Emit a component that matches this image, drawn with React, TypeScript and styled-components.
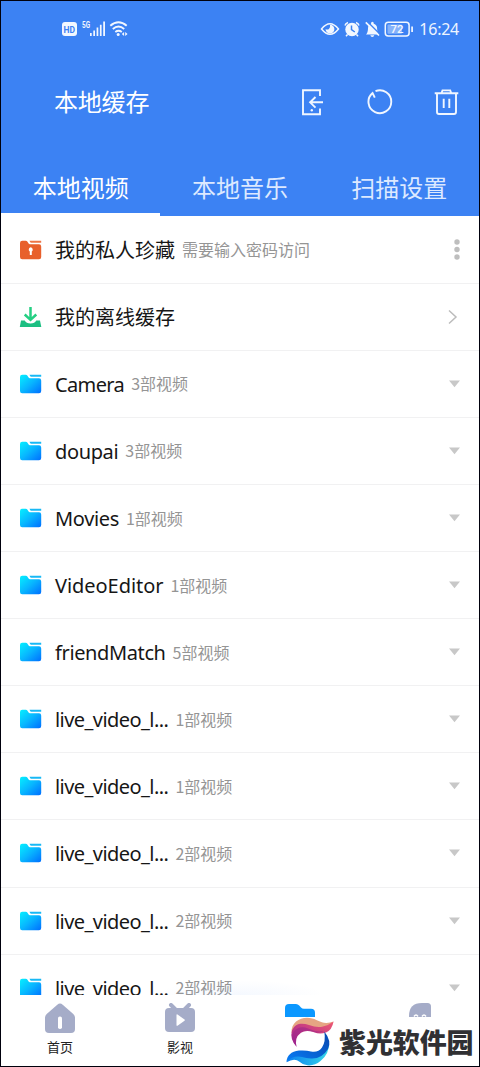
import React from 'react';
import styled, { createGlobalStyle } from 'styled-components';

const Global = createGlobalStyle`
  * { box-sizing: border-box; }
  body { margin: 0; background: #fff; }
`;

const Screen = styled.div`
  position: relative;
  width: 480px;
  height: 1067px;
  overflow: hidden;
  display: flex;
  flex-direction: column;
  background: #fff;
  border: 1px solid #00000c;
  font-family: Roboto, 'Noto Sans CJK SC', sans-serif;
`;

const Header = styled.header`
  flex: none;
  height: 215px;
  display: flex;
  flex-direction: column;
  background: #3c82f3;
  color: #fff;
`;

const StatusBar = styled.div`
  height: 56px;
  padding: 0 20px 0 60px;
  display: flex;
  align-items: center;
  justify-content: space-between;
`;

const StatusGroup = styled.div`
  display: flex;
  align-items: center;
`;

const Clock = styled.span`
  margin-left: 5px;
  font: 400 16px/20px 'Noto Sans', sans-serif;
  letter-spacing: -0.25px;
  color: #eef5ff;
`;

const TitleBar = styled.div`
  height: 89px;
  padding: 0 19px 0 53px;
  display: flex;
  align-items: center;
`;

const Title = styled.h1`
  margin: 0;
  padding-top: 3px;
  flex: 1;
  font-size: 24px;
  line-height: 36px;
  font-weight: 400;
  letter-spacing: -0.2px;
`;

const Actions = styled.div`
  display: flex;
  align-items: center;
  gap: 40px;
`;

const Tabs = styled.nav`
  flex: 1;
  display: flex;
`;

const Tab = styled.div<{ $active?: boolean }>`
  flex: 1;
  display: flex;
  justify-content: center;
  padding-top: 25px;
  font-size: 24px;
  line-height: 36px;
  color: ${p => (p.$active ? '#fff' : '#dce9ff')};
  border-bottom: 3px solid ${p => (p.$active ? '#fff' : 'transparent')};
`;

const List = styled.main`
  flex: 1;
  min-height: 0;
  padding-top: 0.6px;
  overflow: hidden;
`;

const Row = styled.div`
  height: 67.1px;
  padding: 0 18px;
  display: flex;
  align-items: center;
  border-bottom: 1px solid #f1f1f2;
`;

const IconSlot = styled.div`
  flex: none;
  width: 36px;
  display: flex;
`;

const Name = styled.span<{ $spacing?: number }>`
  padding-top: 2px;
  font: 400 20px/30px 'Noto Sans', 'Noto Sans CJK SC', sans-serif;
  letter-spacing: ${p => p.$spacing ?? 0}px;
  color: #161616;
`;

const Meta = styled.span`
  flex: 1;
  margin-left: 7px;
  font: 400 16px/23px 'Noto Sans CJK SC', sans-serif;
  color: #959595;
`;

const BottomNav = styled.nav`
  flex: none;
  height: 71px;
  margin-left: -1px;
  display: flex;
  background: #fff;
`;

const NavItem = styled.div`
  width: 120px;
  flex: none;
  padding-top: 8px;
  display: flex;
  flex-direction: column;
  align-items: center;
  font-size: 13px;
  line-height: 20px;
  color: #222;
  svg { margin-bottom: 4px; }
`;

const Watermark = styled.div`
  position: absolute;
  right: -1px;
  bottom: -1px;
  width: 200px;
  height: 50px;
  padding-left: 5px;
  display: flex;
  align-items: center;
  background: #fff;
`;

const Brand = styled.span`
  margin: -1px 0 0 4px;
  font: 900 27px/40px 'Noto Sans CJK SC', sans-serif;
  letter-spacing: -0.1px;
  color: #303033;
`;

const Glow = styled.div`
  position: absolute;
  left: 159px;
  bottom: 71px;
  width: 160px;
  height: 14px;
  background: radial-gradient(ellipse at 50% 100%, rgba(60, 130, 243, 0.05), transparent 75%);
`;

const NetworkIcons = () => (
  <svg width="70" height="20" viewBox="61 19 70 20" fill="#f2f7ff">
    <rect x="62" y="22" width="15" height="14" rx="3" />
    <text x="63.6" y="32.5" fontFamily="Roboto" fontSize="9.5" fontWeight="700" textLength="11.5" lengthAdjust="spacingAndGlyphs" fill="#3c82f3">HD</text>
    <text x="82" y="27.8" fontFamily="Roboto" fontSize="9" fontWeight="700" textLength="8" lengthAdjust="spacingAndGlyphs">5G</text>
    <path d="M90 33h1.7v3H90zM93.3 30.5h1.7V36h-1.7zM96.6 27.5h1.7V36h-1.7zM99.9 24.7h1.7V36h-1.7zM103.2 21.5h1.8V36h-1.8z" />
    <g fill="none" stroke="#f2f7ff" strokeWidth="1.9">
      <path d="M110.3 25.7q8.2-7 16.4 0M112.8 29q5.7-4.8 11.4 0M115.3 32q3.3-2.5 6.5 0" />
    </g>
    <circle cx="118.2" cy="34.6" r="1.5" />
    <path d="M121.8 34l2.3-2v4zM125.2 32l2.4 2-2.4 2z" />
  </svg>
);

const SystemIcons = () => (
  <svg width="94" height="20" viewBox="319.5 19 94 20" fill="none" stroke="#f2f7ff" strokeWidth="1.5">
    <path d="M321 29q8.500-10.500 17 0q-8.500 10.500-17 0z" />
    <path d="M329.500 24.700a4.400 4.400 0 1 1-4.400 4.400q2 1.200 3.500-.4t.9-4z" fill="#f2f7ff" stroke="none" />
    <circle cx="351.500" cy="29.500" r="6.700" fill="#f2f7ff" stroke="none" />
    <path d="M344.500 25.500q.5-2 3-3M355.500 22.500q2.500 1 3 3M347 34.500l-1.500 1.800M356 34.500l1.500 1.800" />
    <path d="M351 25.500v4.200l3.300 2.300" stroke="#3c82f3" />
    <path d="M365.500 34.500q2-1.700 2-6.200 0-3.500 3-4.500 0-2 1.400-2t1.400 2q3.300 1 3.300 4.500 0 4.500 2 6.200zM369.800 35.200h4q-.4 1.700-2 1.700t-2-1.700z" fill="#f2f7ff" stroke="none" />
    <path d="M366.500 21.300l14 14" stroke="#3c82f3" strokeWidth="1.5" />
    <path d="M365.300 22.300l13.200 13.200" strokeWidth="1.7" />
    <rect x="384.800" y="22.300" width="23.800" height="13.700" rx="3" />
    <rect x="387" y="24.500" width="14.500" height="9.300" rx="1" fill="#85b2fa" stroke="none" />
    <path d="M411.600 26.500v5.500" strokeWidth="1.7" />
    <text x="390" y="33.2" fontFamily="Roboto" fontSize="11" fontWeight="500" textLength="13" lengthAdjust="spacingAndGlyphs" fill="#f2f7ff" stroke="none">72</text>
  </svg>
);

const ImportIcon = () => (
  <svg width="26" height="28" viewBox="0 0 26 28" fill="none" stroke="#f0f6ff" strokeWidth="1.9">
    <path d="M20 8V2.200H3v24h17v-5.700M23 14.300H11M15.500 9l-5.400 5.300 5.400 5.400" />
    <circle cx="11.800" cy="22.300" r="1.200" fill="#f0f6ff" stroke="none" />
  </svg>
);

const RefreshIcon = () => (
  <svg width="28" height="28" viewBox="0.5 0 28 28" fill="none" stroke="#f0f6ff" strokeWidth="1.9">
    <path d="M10 3.200A11.400 11.400 0 1 1 6.800 5.200M4.400 7.900L7.100 5.100 9.300 9.600" />
  </svg>
);

const TrashIcon = () => (
  <svg width="26" height="28" viewBox="0.5 0 26 28" fill="none" stroke="#f0f6ff" strokeWidth="1.9">
    <path d="M1.200 5.200h23.600M8 5l1-2.600h7.700l1 2.600M3.500 5.500V24q0 2 2 2h15q2 0 2-2V5.500M10.200 10.700v9.400M15.800 10.700v9.400" />
  </svg>
);

const FolderIcon = ({ locked = false }: { locked?: boolean }) => (
  <svg width="23" height="20" viewBox="0 0 23 20">
    <defs>
      <linearGradient id="folderBlue" x1="0" y1="0" x2="1" y2="1">
        <stop offset="0" stopColor="#05f0ff" />
        <stop offset=".5" stopColor="#08b5ff" />
        <stop offset="1" stopColor="#006eff" />
      </linearGradient>
    </defs>
    <path
      d="M1 3q0-2.300 2.300-2.300h3.500q1 0 1.500.8l1.300 2q.4.7 1.300.7H20q2.200 0 2.200 2.200V17q0 2.300-2.200 2.300H3.200Q1 19.300 1 17z"
      fill={locked ? '#e8602c' : 'url(#folderBlue)'}
    />
    <path d="M10.500.8h11.700v2H12q-.8 0-1.500-2z" fill={locked ? '#ee7546' : '#18b9f5'} />
    {locked && <path d="M11.500 7.200a2.400 2.400 0 0 1 1.300 4.300v3.600h-2v-3.600a2.400 2.400 0 0 1 .7-4.300z" fill="#fff" />}
  </svg>
);

const DownloadIcon = () => (
  <svg width="23" height="22" viewBox="0 0 23 22">
    <path d="M2 14.500h3.700q1.500 3 5.800 3t5.800-3H21l1.300 6.500H.8z" fill="#1cbf82" />
    <path d="M11.500 1v12M5.700 8.500l5.800 5.300 5.800-5.300" fill="none" stroke="#25cf83" strokeWidth="2.5" />
  </svg>
);

const MoreIcon = () => (
  <svg width="8" height="22" viewBox="0 0 8 22" fill="#bebebe">
    <circle cx="4" cy="3" r="2.7" />
    <circle cx="4" cy="10.5" r="2.7" />
    <circle cx="4" cy="18" r="2.7" />
  </svg>
);

const ChevronIcon = () => (
  <svg width="14" height="16" viewBox="0 0 14 16" fill="none" stroke="#bcbcbc" strokeWidth="1.5">
    <path d="M2 1.500L9 8l-7 6.500" />
  </svg>
);

const CaretIcon = () => (
  <svg width="13" height="8" viewBox="0 0 13 8">
    <path d="M1 .5h11L6.500 7.300z" fill="#c8c8c8" />
  </svg>
);

const HomeIcon = () => (
  <svg width="30" height="31" viewBox="0 0 30 31">
    <path d="M12.300 1.700q2.700-2.300 5.400 0L28.300 11q1.700 1.500 1.700 3.500V26q0 4-4 4H4q-4 0-4-4V14.500q0-2 1.700-3.500z" fill="#a5acc8" />
    <rect x="13" y="13.500" width="4" height="12.500" rx="1.800" fill="#fff" />
  </svg>
);

const TvIcon = () => (
  <svg width="30" height="31" viewBox="0 0 30 31">
    <path d="M6 2l5 5M24 2l-5 5" stroke="#a5acc8" strokeWidth="4" strokeLinecap="round" />
    <rect y="5" width="30" height="24" rx="4" fill="#a5acc8" />
    <path d="M11.500 12q0-1 1-.5l7 5q.8.6 0 1.200l-7 5q-1 .5-1-.5z" fill="#fff" />
  </svg>
);

const FilesIcon = () => (
  <svg width="30" height="31" viewBox="0 0 30 31">
    <path d="M0 5q0-4 4-4h7q2 0 3.200 1.500l1.800 2q1 1.200 3 1.200h7q4 0 4 4V30H0z" fill="#0b98ff" />
  </svg>
);

const ProfileIcon = () => (
  <svg width="30" height="31" viewBox="0 0 30 31">
    <path d="M4 13Q4 0 17 0h5.500Q26 0 26 3.500V13q0 12-11 12T4 13z" fill="#a5acc8" />
    <path d="M9 13.500q2-3 4 0M17 13.500q2-3 4 0" fill="none" stroke="#fff" strokeWidth="1.5" />
  </svg>
);

const BrandLogo = () => (
  <svg width="50" height="50" viewBox="0 0 50 50">
    <defs>
      <linearGradient id="magenta" x1="0" y1="1" x2="1" y2="0">
        <stop offset="0" stopColor="#9c2094" />
        <stop offset="1" stopColor="#ef5a72" />
      </linearGradient>
      <linearGradient id="azure" x1="0" y1="0" x2="1" y2="0">
        <stop offset="0" stopColor="#0a7df0" />
        <stop offset="1" stopColor="#36d7e8" />
      </linearGradient>
      <linearGradient id="cobalt" x1="0" y1="1" x2="1" y2="0">
        <stop offset="0" stopColor="#087cf5" />
        <stop offset="1" stopColor="#0846ad" />
      </linearGradient>
    </defs>
    <path d="M6.500 16C6 6 14 .8 22 .8c8 0 11 4 17 5q5 .6 9.500-1.300L42 12 20 13z" fill="#e6a583" />
    <path d="M11.700 30Q4.500 22 7 13.500C10 6 17 5.500 24 8q8 3 14 1.500 6-1.500 10.600-5Q47 13 41 15.500q-6 2.300-12-.2-8-3-13 .5-7 5-4.300 14.200z" fill="url(#magenta)" />
    <path d="M9 14q6-6 14-2.500 8 4 16 2.500-5 3-12 .6-7-2.300-11.500 1Q9 20 11 29 4.500 21 9 14z" fill="#9b258b" opacity=".55" />
    <path d="M44 25q.5 12-8.500 19-6 5-13 4.300-5-.5-8-3.500-5-4.500-13 .5Q5 36 15 38l18 2z" fill="url(#azure)" />
    <path d="M39.300 14.500Q47 24 43 32q-6 10-17 9.500-5-.3-9-1.500-9-2-15.500 5Q2 35 14 33.500q7-.5 12 1 7 1.500 11-4 4-6 2.300-16z" fill="url(#cobalt)" />
  </svg>
);

const folders = [
  { name: 'Camera', count: 3, spacing: -0.62 },
  { name: 'doupai', count: 3, spacing: -0.37 },
  { name: 'Movies', count: 1, spacing: -0.35 },
  { name: 'VideoEditor', count: 1, spacing: -0.05 },
  { name: 'friendMatch', count: 5, spacing: -0.38 },
  { name: 'live_video_l...', count: 1, spacing: -0.56 },
  { name: 'live_video_l...', count: 1, spacing: -0.56 },
  { name: 'live_video_l...', count: 2, spacing: -0.56 },
  { name: 'live_video_l...', count: 2, spacing: -0.56 },
  { name: 'live_video_l...', count: 2, spacing: -0.56 },
];

export default function App() {
  return (
    <>
      <Global />
      <Screen>
        <Header>
          <StatusBar>
            <StatusGroup><NetworkIcons /></StatusGroup>
            <StatusGroup><SystemIcons /><Clock>16:24</Clock></StatusGroup>
          </StatusBar>
          <TitleBar>
            <Title>本地缓存</Title>
            <Actions><ImportIcon /><RefreshIcon /><TrashIcon /></Actions>
          </TitleBar>
          <Tabs>
            <Tab $active>本地视频</Tab>
            <Tab>本地音乐</Tab>
            <Tab>扫描设置</Tab>
          </Tabs>
        </Header>
        <List>
          <Row>
            <IconSlot><FolderIcon locked /></IconSlot>
            <Name>我的私人珍藏</Name>
            <Meta>需要输入密码访问</Meta>
            <MoreIcon />
          </Row>
          <Row>
            <IconSlot><DownloadIcon /></IconSlot>
            <Name>我的离线缓存</Name>
            <Meta />
            <ChevronIcon />
          </Row>
          {folders.map((folder, i) => (
            <Row key={i}>
              <IconSlot><FolderIcon /></IconSlot>
              <Name $spacing={folder.spacing}>{folder.name}</Name>
              <Meta>{folder.count}部视频</Meta>
              <CaretIcon />
            </Row>
          ))}
        </List>
        <BottomNav>
          <NavItem><HomeIcon />首页</NavItem>
          <NavItem><TvIcon />影视</NavItem>
          <NavItem><FilesIcon /></NavItem>
          <NavItem><ProfileIcon /></NavItem>
        </BottomNav>
        <Glow />
        <Watermark><BrandLogo /><Brand>紫光软件园</Brand></Watermark>
      </Screen>
    </>
  );
}
